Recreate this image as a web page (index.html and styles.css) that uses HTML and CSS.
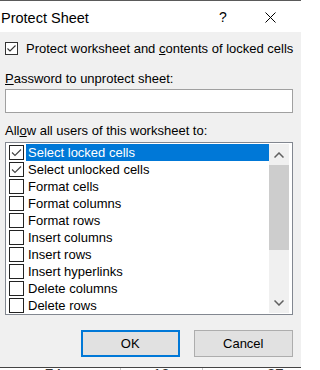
FILE: index.html
```html
<!DOCTYPE html>
<html>
<head>
<meta charset="utf-8">
<link rel="stylesheet" href="styles.css">
</head>
<body>
<div class="window">
  <div class="titlebar">
    <span class="title">Protect Sheet</span>
    <span class="help">?</span>
    <svg class="close" width="11" height="11" viewBox="0 0 11 11"><path d="M0.5 0.5 L10.5 10.5 M10.5 0.5 L0.5 10.5" stroke="#000" stroke-width="1" fill="none"/></svg>
  </div>
  <div class="content">
    <div class="check-row">
      <span class="cb"><svg width="11" height="11" viewBox="0 0 11 11"><path d="M1.5 5.5 L4 8 L9.5 2.5" stroke="#333" stroke-width="1.1" fill="none"/></svg></span>
      <span class="label">Protect worksheet and <u>c</u>ontents of locked cells</span>
    </div>
    <div class="field-label"><u>P</u>assword to unprotect sheet:</div>
    <div class="input"></div>
    <div class="field-label allow">All<u>o</u>w all users of this worksheet to:</div>
    <div class="listbox">
      <div class="items">
        <div class="item selected"><span class="lcb"><svg width="13" height="13" viewBox="0 0 13 13"><path d="M2 6.5 L5 9.5 L11 3.5" stroke="#444" stroke-width="1.1" fill="none"/></svg></span><span class="text">Select locked cells</span></div>
        <div class="item"><span class="lcb"><svg width="13" height="13" viewBox="0 0 13 13"><path d="M2 6.5 L5 9.5 L11 3.5" stroke="#444" stroke-width="1.1" fill="none"/></svg></span><span class="text">Select unlocked cells</span></div>
        <div class="item"><span class="lcb"></span><span class="text">Format cells</span></div>
        <div class="item"><span class="lcb"></span><span class="text">Format columns</span></div>
        <div class="item"><span class="lcb"></span><span class="text">Format rows</span></div>
        <div class="item"><span class="lcb"></span><span class="text">Insert columns</span></div>
        <div class="item"><span class="lcb"></span><span class="text">Insert rows</span></div>
        <div class="item"><span class="lcb"></span><span class="text">Insert hyperlinks</span></div>
        <div class="item"><span class="lcb"></span><span class="text">Delete columns</span></div>
        <div class="item"><span class="lcb"></span><span class="text">Delete rows</span></div>
      </div>
      <div class="scrollbar">
        <div class="sb-btn"><svg width="10" height="6" viewBox="0 0 10 6"><path d="M0.5 5.5 L5 1 L9.5 5.5" stroke="#606060" stroke-width="1.5" fill="none"/></svg></div>
        <div class="sb-thumb"></div>
        <div class="sb-track"></div>
        <div class="sb-btn"><svg width="10" height="6" viewBox="0 0 10 6"><path d="M0.5 0.5 L5 5 L9.5 0.5" stroke="#606060" stroke-width="1.5" fill="none"/></svg></div>
      </div>
    </div>
    <div class="buttons">
      <div class="btn default">OK</div>
      <div class="btn">Cancel</div>
    </div>
  </div>
  <div class="sheet">
    <div class="cell c1"><span>74</span></div>
    <div class="cell c2"><span>12</span></div>
    <div class="cell c3"><span>87</span></div>
  </div>
</div>
</body>
</html>
```
FILE: styles.css
```css
html, body {
  margin: 0;
  padding: 0;
  background: #fff;
}
body {
  font-family: "Liberation Sans", Arial, sans-serif;
  font-size: 13px;
  color: #000;
  width: 301px;
  height: 370px;
  overflow: hidden;
}
.window {
  border-top: 1px solid #5a5a5a;
  display: flex;
  flex-direction: column;
}
.titlebar {
  height: 31px;
  background: #fff;
  display: flex;
  align-items: center;
  padding-left: 1px;
}
.title {
  font-size: 14.5px;
  flex: 1;
  padding-top: 2px;
}
.help {
  font-size: 14px;
  width: 12px;
  margin-right: 34px;
  padding-top: 1px;
}
.close {
  margin-right: 25px;
  margin-top: 2px;
}
.content {
  background: #f0f0f0;
  height: 335px;
  padding: 0 8px 0 5px;
  display: flex;
  flex-direction: column;
}
.check-row {
  display: flex;
  align-items: center;
  margin-top: 10px;
  height: 13px;
}
.cb {
  width: 11px;
  height: 11px;
  border: 1px solid #333;
  background: #fff;
  display: flex;
  margin-right: 8px;
}
.label {
  white-space: nowrap;
}
.field-label {
  margin-top: 16px;
  line-height: 15px;
  height: 15px;
}
.input {
  margin-top: 3px;
  height: 22px;
  border: 1px solid #a0a0a0;
  background: #fff;
}
.allow {
  margin-top: 10px;
}
.listbox {
  margin-top: 4px;
  border: 1px solid #828790;
  background: #fff;
  display: flex;
  padding: 1px 2px 0 2px;
  box-sizing: border-box;
  height: 173px;
}
.items {
  flex: 1;
  display: flex;
  flex-direction: column;
}
.item {
  height: 17px;
  display: flex;
  align-items: center;
}
.lcb {
  width: 13px;
  height: 13px;
  border: 1px solid #222;
  margin-right: 2px;
  margin-left: 1px;
  background: #fff;
  display: flex;
}
.text {
  flex: 1;
  height: 17px;
  line-height: 17px;
  padding-left: 2px;
  white-space: nowrap;
}
.item.selected .text {
  background: #0078d7;
  color: #fff;
}
.scrollbar {
  width: 20px;
  background: #f0f0f0;
  display: flex;
  flex-direction: column;
  margin-right: 1px;
  margin-bottom: 1px;
}
.sb-btn {
  height: 21px;
  display: flex;
  align-items: center;
  justify-content: center;
}
.sb-thumb {
  height: 85px;
  background: #cdcdcd;
}
.sb-track {
  flex: 1;
}
.buttons {
  display: flex;
  margin-top: 15px;
  padding-left: 76px;
  gap: 14px;
}
.btn {
  width: 98px;
  height: 25px;
  border: 1px solid #adadad;
  background: #e1e1e1;
  display: flex;
  align-items: center;
  justify-content: center;
}
.btn.default {
  border: 2px solid #0078d7;
  width: 95px;
  height: 23px;
}
.sheet {
  border-top: 1px solid #444;
  height: 2px;
  overflow: hidden;
  display: flex;
  background: #fff;
}
.cell {
  height: 2px;
  overflow: hidden;
  font-size: 15px;
  line-height: 15px;
  color: #333;
  border-right: 1px solid #c8c8c8;
  box-sizing: border-box;
}
.cell span {
  display: block;
  margin-top: -2px;
}
.c1 { width: 121px; padding-left: 45px; }
.c2 { width: 82px; padding-left: 32px; }
.c3 { width: 98px; padding-left: 64px; border-right: none; }
```
